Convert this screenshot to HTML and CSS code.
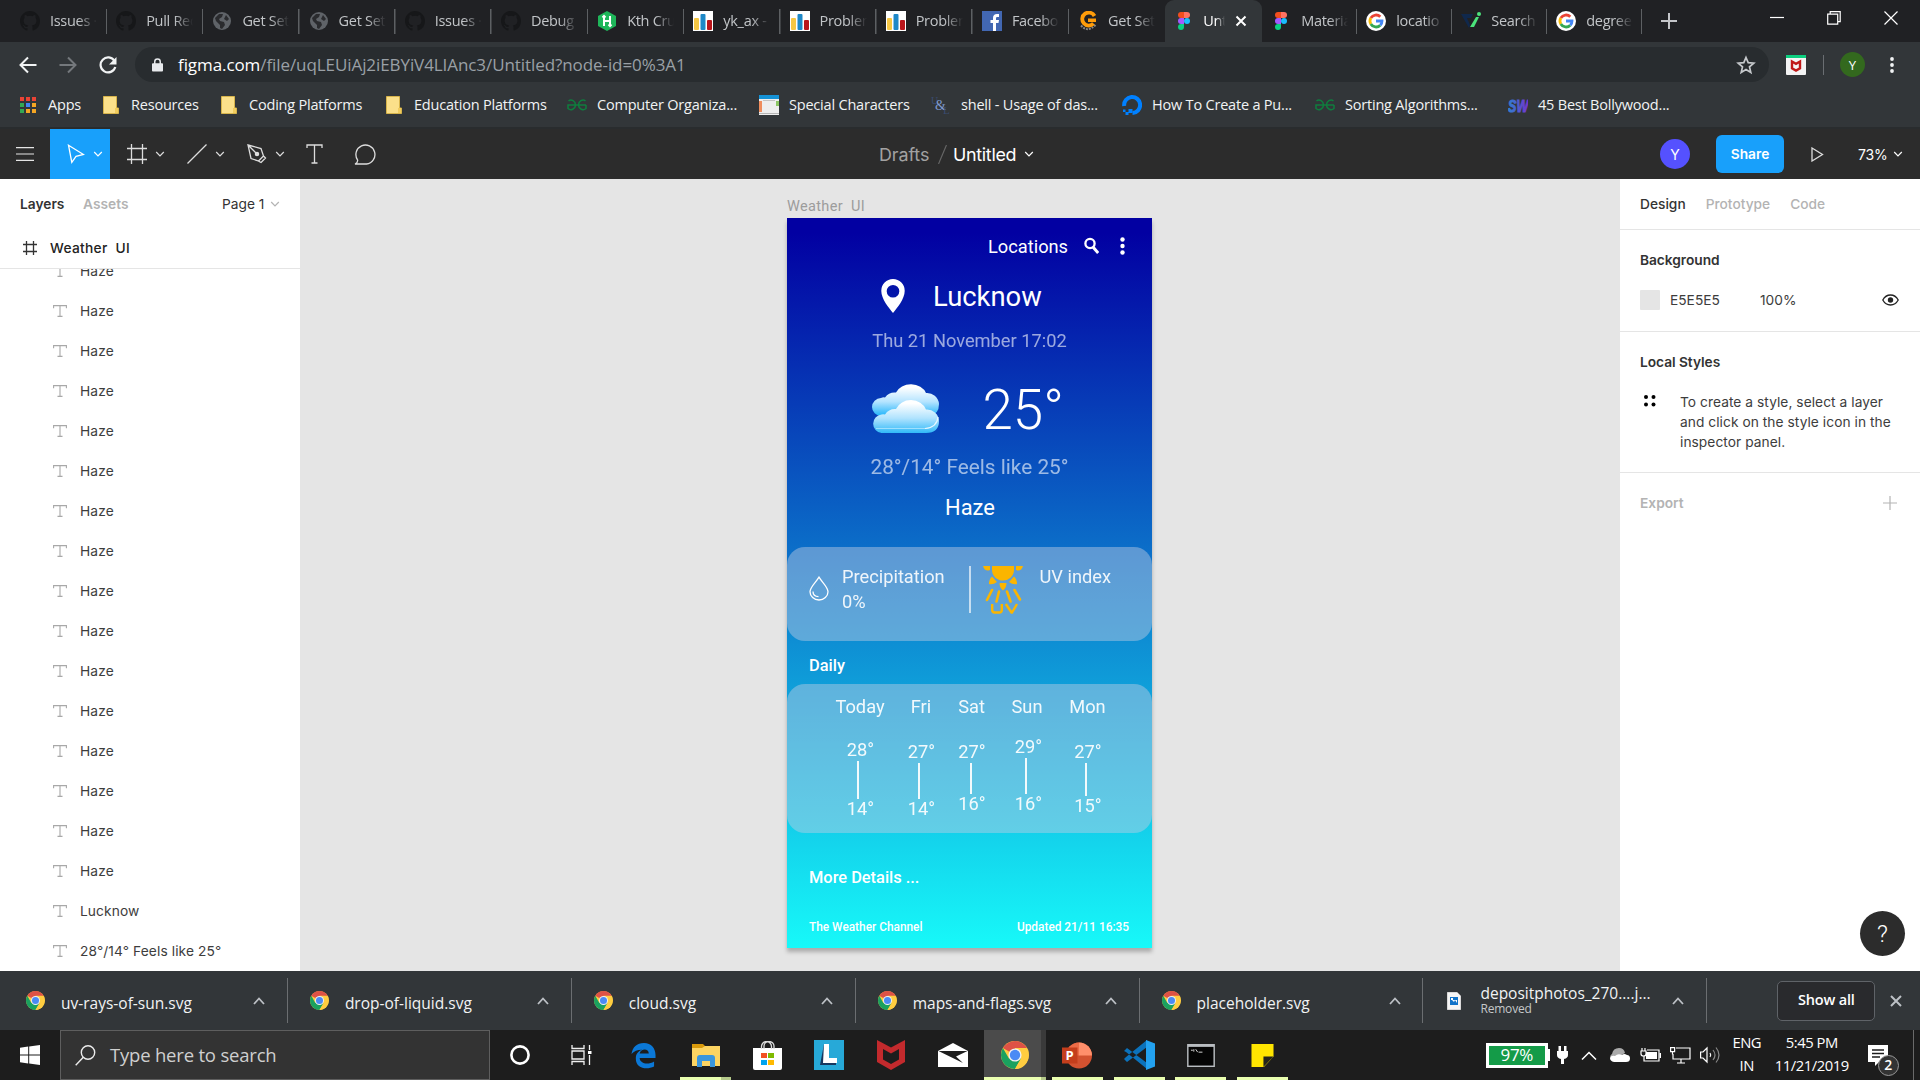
FILE: index.html
```html
<!DOCTYPE html>
<html lang="en">
<head>
<meta charset="utf-8">
<title>Untitled</title>
<link rel="stylesheet" href="styles.css">
</head>
<body>
<svg class="sprite" width="0" height="0">
  <defs>
    <linearGradient id="cloudBack" x1="0" y1="0" x2="0" y2="1"><stop offset="0.1" stop-color="#fff"/><stop offset="0.55" stop-color="#b5e4ff"/><stop offset="1" stop-color="#1fb4fb"/></linearGradient>
    <linearGradient id="cloudFront" x1="0" y1="0" x2="0" y2="1"><stop offset="0.1" stop-color="#fff"/><stop offset="0.55" stop-color="#b0e3fe"/><stop offset="1" stop-color="#30b9f8"/></linearGradient>
    <linearGradient id="swGrad"><stop offset="0" stop-color="#2f7fd0"/><stop offset="1" stop-color="#7a2fd0"/></linearGradient>
    <symbol id="github" viewBox="0 0 16 16"><path fill="#161719" d="M8 0C3.58 0 0 3.58 0 8c0 3.54 2.29 6.53 5.47 7.59.4.07.55-.17.55-.38v-1.49c-2.01.37-2.53-.49-2.69-.94-.09-.23-.48-.94-.82-1.13-.28-.15-.68-.52-.01-.53.63-.01 1.08.58 1.23.82.72 1.21 1.87.87 2.33.66.07-.52.28-.87.51-1.07-1.78-.2-3.64-.89-3.64-3.95 0-.87.31-1.59.82-2.15-.08-.2-.36-1.02.08-2.12 0 0 .67-.21 2.2.82a7.4 7.4 0 0 1 4 0c1.53-1.04 2.2-.82 2.2-.82.44 1.1.16 1.92.08 2.12.51.56.82 1.27.82 2.15 0 3.07-1.87 3.75-3.65 3.95.29.25.54.73.54 1.48v2.2c0 .21.15.46.55.38A8.01 8.01 0 0 0 16 8c0-4.42-3.58-8-8-8z"/></symbol>
    <symbol id="globe" viewBox="0 0 20 20"><circle cx="10" cy="10" r="9" fill="#5f6368"/><path fill="#2a2b2e" d="M3 7l4-4 4 0-1 3-3 2 1 2 4 1 1 3-3 4-2-1 0-3-4-4zM14 4l3 4-2 2-3-2z"/></symbol>
    <symbol id="hacker" viewBox="0 0 20 20"><path fill="#1fb65a" d="M10 0l9 5v10l-9 5-9-5V5z"/><path stroke="#fff" stroke-width="2" fill="none" d="M7 5v10M13 5v10M7 10h6M5.500 6.500L7 5l1.500 1.500M11.500 13.500L13 15l1.500-1.500"/></symbol>
    <symbol id="bars" viewBox="0 0 20 20"><path fill="#fff" d="M0 0h20v20H0z"/><rect x="1" y="7" width="5" height="12" rx="1" fill="#f6c744"/><rect x="7.500" y="3" width="5" height="16" rx="1" fill="#1e88c7"/><rect x="14" y="9" width="5" height="10" rx="1" fill="#b9151b"/></symbol>
    <symbol id="fb" viewBox="0 0 20 20"><path fill="#4267b2" d="M0 0h20v20H0z"/><path fill="#fff" d="M11 20v-8H8.500V9H11V7c0-2.700 1.500-4 4-4h2v3h-1.600c-1.200 0-1.400.6-1.400 1.500V9h3l-.5 3H14v8z"/></symbol>
    <symbol id="cfav" viewBox="0 0 20 20"><path fill="none" stroke="#888" stroke-width="2" d="M3 14.500q6.500 7.500 14.500-.5" stroke-dasharray="2 1"/><path fill="none" stroke="#ff9d0a" stroke-width="3.800" d="M16.500 5A6.500 6.500 0 1 0 15.500 12.500"/><path fill="#ff9d0a" d="M10 7.500h8V11h-8z"/></symbol>
    <symbol id="figma" viewBox="0 0 20 20"><path fill="#f24e1e" d="M7 1h3v6H7a3 3 0 0 1 0-6"/><path fill="#ff7262" d="M10 1h3a3 3 0 0 1 0 6h-3"/><path fill="#a259ff" d="M10 7v6H7a3 3 0 0 1 0-6"/><circle cx="13" cy="10" r="3" fill="#1abcfe"/><path fill="#0acf83" d="M10 13v3a3 3 0 1 1-3-3"/></symbol>
    <symbol id="google" viewBox="0 0 20 20"><circle cx="10" cy="10" r="10" fill="#fff"/><g fill="none" stroke-width="2.800"><path stroke="#ea4335" d="M4.800 7A6 6 0 0 1 14.300 5.800"/><path stroke="#fbbc05" d="M4.800 7a6 6 0 0 0 0 6"/><path stroke="#34a853" d="M4.800 13a6 6 0 0 0 9.500 1.200"/><path stroke="#4285f4" d="M14.300 14.200A6 6 0 0 0 16 10h-6"/></g></symbol>
    <symbol id="vi" viewBox="0 0 20 20"><path fill="#10284c" d="M0 3h12l-2 4H6l3 7-1 3z"/><path fill="#4be37b" d="M15 6h3l-5 10h-4z"/><circle cx="18" cy="3" r="2" fill="#4be37b"/></symbol>
    <symbol id="folder" viewBox="0 0 16 18"><path fill="#fbe08a" stroke="#d7b44b" d="M.5.5h13V12h2v5.500H.500z"/><path fill="#f1cc5d" d="M12 12h3v5h-3z"/></symbol>
    <symbol id="gfg" viewBox="0 0 20 14"><g fill="none" stroke="#0f7d3e" stroke-width="1.500"><path d="M1.500 2.800A4.600 5 0 0 1 8.500 7a4.600 5 0 0 1-7.500 3.500V7h18M18.500 2.800A4.600 5 0 0 0 11.500 7a4.600 5 0 0 0 7.500 3.500V7"/></g></symbol>
    <symbol id="chrome" viewBox="0 0 20 20"><circle cx="10" cy="10" r="10" fill="#ffcd40"/><path fill="#de5246" d="M10 10L1.340 5A10 10 0 0 1 18.660 5H10z"/><path fill="#1aa15f" d="M1.340 5A10 10 0 0 0 10 20l4.300-7.500L10 10 5.670 12.500z"/><path fill="#ffcd40" d="M18.660 5.500H10L14.330 12.500 10 20A10 10 0 0 0 18.660 5.500"/><circle cx="10" cy="10" r="4.700" fill="#f1f1f1"/><circle cx="10" cy="10" r="3.700" fill="#4a8af4"/></symbol>
    <symbol id="chev" viewBox="0 0 10 6"><path fill="none" stroke="currentColor" stroke-width="1.200" d="M1.200 1L5 4.800 8.800 1"/></symbol>
    <symbol id="up" viewBox="0 0 12 8"><path fill="none" stroke="#bdc1c6" stroke-width="1.800" d="M1 7l5-5.500L11 7"/></symbol>
    <symbol id="tt" viewBox="0 0 14 12"><path fill="none" stroke="#a8a8a8" stroke-width="1.100" d="M.6 3.200V.6h12.800v2.600M7 .6v10.800M4.500 11.400h5"/></symbol>
  </defs>
</svg>

<header class="tabs">
  <div class="tab"><svg><use href="#github"/></svg><span>Issues ·</span></div>
  <div class="tab"><svg><use href="#github"/></svg><span>Pull Req</span></div>
  <div class="tab"><svg><use href="#globe"/></svg><span>Get Set</span></div>
  <div class="tab"><svg><use href="#globe"/></svg><span>Get Set</span></div>
  <div class="tab"><svg><use href="#github"/></svg><span>Issues ·</span></div>
  <div class="tab"><svg><use href="#github"/></svg><span>Debug</span></div>
  <div class="tab"><svg><use href="#hacker"/></svg><span>Kth Cru</span></div>
  <div class="tab"><svg><use href="#bars"/></svg><span>yk_ax -</span></div>
  <div class="tab"><svg><use href="#bars"/></svg><span>Problem</span></div>
  <div class="tab"><svg><use href="#bars"/></svg><span>Problem</span></div>
  <div class="tab"><svg><use href="#fb"/></svg><span>Facebo</span></div>
  <div class="tab before-active"><svg><use href="#cfav"/></svg><span>Get Set</span></div>
  <div class="tab active"><svg><use href="#figma"/></svg><span>Unt</span><svg class="close" viewBox="0 0 12 12"><path fill="none" stroke="#fff" stroke-width="2" d="M1.500 1.500l9 9M10.500 1.500l-9 9"/></svg></div>
  <div class="tab late"><svg><use href="#figma"/></svg><span>Materia</span></div>
  <div class="tab late"><svg><use href="#google"/></svg><span>locatio</span></div>
  <div class="tab late"><svg><use href="#vi"/></svg><span>Search</span></div>
  <div class="tab late"><svg><use href="#google"/></svg><span>degree</span></div>
  <svg class="newtab" viewBox="0 0 16 16"><path stroke="#c4c6c9" stroke-width="2" d="M8 0v16M0 8h16"/></svg>
  <div class="winctl">
    <svg viewBox="0 0 14 14"><path stroke="#fff" stroke-width="1.200" d="M0 6.500h14"/></svg>
    <svg viewBox="0 0 14 14"><path fill="none" stroke="#fff" stroke-width="1.200" d="M.7 3.200h10v10h-10zM3.200 3V.7h10v10h-2.500"/></svg>
    <svg viewBox="0 0 14 14"><path stroke="#fff" stroke-width="1.200" d="M.5.5l13 13M13.500.500l-13 13"/></svg>
  </div>
</header>

<div class="addr">
  <svg class="nav" viewBox="0 0 18 18"><path fill="none" stroke="#f1f3f4" stroke-width="2" d="M17.500 9H2M9 1.500L1.500 9 9 16.500"/></svg>
  <svg class="nav" viewBox="0 0 18 18"><path fill="none" stroke="#74787c" stroke-width="2" d="M.5 9H16M9 1.500L16.500 9 9 16.500"/></svg>
  <svg class="nav" viewBox="0 0 18 18"><path fill="none" stroke="#f1f3f4" stroke-width="2.200" d="M15.500 5A7.500 7.500 0 1 0 16.300 11"/><path fill="#f1f3f4" d="M17.500 1v7.500H10z"/></svg>
  <div class="omni">
    <svg class="lock" viewBox="0 0 12 14"><rect y="5" width="12" height="9" rx="1" fill="#e8eaed"/><path fill="none" stroke="#e8eaed" stroke-width="1.600" d="M3 6V3.500a3 3 0 0 1 6 0V6"/></svg>
    <span class="url"><b>figma.com</b>/file/uqLEUiAj2iEBYiV4LIAnc3/Untitled?node-id=0%3A1</span>
    <svg class="star" viewBox="0 0 20 20"><path fill="none" stroke="#c6c9cc" stroke-width="1.700" d="M10 2.500l2.200 5.200 5.600.5-4.300 3.700 1.300 5.500L10 14.500l-4.800 2.900 1.300-5.500L2.200 8.200l5.600-.5z"/></svg>
  </div>
  <svg class="ext" viewBox="0 0 20 20"><rect width="20" height="20" rx="1" fill="#f4f4f4"/><path fill="#0ccf7f" d="M0 0h20v3H0z"/><path fill="none" stroke="#c01818" stroke-width="2.400" d="M6 6.500l4 2.300 4-2.300v6.700l-4 2.300-4-2.300z"/></svg>
  <i class="vbar"></i>
  <span class="me">Y</span>
  <svg class="kebab" viewBox="0 0 4 16"><g fill="#f1f3f4"><circle cx="2" cy="2" r="1.900"/><circle cx="2" cy="8" r="1.900"/><circle cx="2" cy="14" r="1.900"/></g></svg>
</div>

<nav class="marks">
  <a class="narrow"><svg viewBox="0 0 16 16"><g fill="#ea4335"><path d="M0 0h4v4H0zM6 0h4v4H6zM12 0h4v4h-4z"/></g><path fill="#34a853" d="M0 6h4v4H0zM0 12h4v4H0z"/><path fill="#4285f4" d="M6 6h4v4H6z"/><path fill="#f5a623" d="M12 6h4v4h-4zM6 12h4v4H6zM12 12h4v4h-4z"/></svg><span>Apps</span></a>
  <a class="narrow"><svg><use href="#folder"/></svg><span>Resources</span></a>
  <a class="narrow"><svg><use href="#folder"/></svg><span>Coding Platforms</span></a>
  <a class="narrow"><svg><use href="#folder"/></svg><span>Education Platforms</span></a>
  <a><svg><use href="#gfg"/></svg><span>Computer Organiza...</span></a>
  <a><svg viewBox="0 0 20 20"><path fill="#eee" d="M0 0h20v20H0z"/><path fill="#1592d6" d="M0 0h20v4H0z"/><path fill="#ef8d5d" d="M0 6h3v11H0z"/><path fill="#8cc665" d="M17 6h3v5h-3z"/><path fill="#b5b5b5" d="M0 18h20v1H0zM4 5h12v.7H4z"/></svg><span>Special Characters</span></a>
  <a><svg viewBox="0 0 20 20"><g font-family="Liberation Serif"><text x="0" y="9" fill="#3a4c70" font-size="10">U</text><text x="4" y="15" fill="#7f9ad0" font-size="14">&amp;</text><text x="12" y="19" fill="#3a4c70" font-size="11">L</text></g></svg><span>shell - Usage of das...</span></a>
  <a><svg viewBox="0 0 20 20"><path fill="none" stroke="#0080ff" stroke-width="4" d="M2.200 11A8 8 0 1 1 10.500 18"/><path fill="#0080ff" d="M6.500 14h4v4h-4zM3.500 17h3v3h-3zM1 14.500h2.500V17H1z"/></svg><span>How To Create a Pu...</span></a>
  <a><svg><use href="#gfg"/></svg><span>Sorting Algorithms...</span></a>
  <a><svg viewBox="0 0 20 20"><text transform="translate(0 17) scale(.74 1)" font-family="Liberation Sans" font-weight="700" font-style="italic" font-size="17" fill="url(#swGrad)" stroke="url(#swGrad)">SW</text></svg><span>45 Best Bollywood...</span></a>
</nav>

<div class="figbar">
  <div class="tools">
    <div class="menu"><svg width="18" height="14" viewBox="0 0 18 14"><path stroke="#e5e5e5" stroke-width="1.200" d="M0 .7h18M0 7h18M0 13.300h18"/></svg></div>
    <div class="tool on"><svg width="18" height="20" viewBox="0 0 18 20"><path fill="none" stroke="#fff" stroke-width="1.300" d="M1.500 1.200l15 9.300-7.500 1.800-4.200 6z"/></svg><svg class="cv"><use href="#chev"/></svg></div>
    <div class="tool"><svg width="20" height="20" viewBox="0 0 20 20"><path stroke="#ddd" stroke-width="1.300" d="M4.500 0v20M15.500 0v20M0 4.500h20M0 15.500h20"/></svg><svg class="cv"><use href="#chev"/></svg></div>
    <div class="tool"><svg width="20" height="20" viewBox="0 0 20 20"><path stroke="#ddd" stroke-width="1.300" d="M.5 19.500l19-19"/></svg><svg class="cv"><use href="#chev"/></svg></div>
    <div class="tool"><svg width="20" height="20" viewBox="0 0 20 20"><g fill="none" stroke="#ddd" stroke-width="1.300"><path d="M1 1l13 3.500 2.500 7.500-5 5-7.500-2.500zM1 1l8 8M14 18.500l4.500-4.500-2-2-5 5z"/><circle cx="10" cy="10" r="1.600" fill="#ddd"/></g></svg><svg class="cv"><use href="#chev"/></svg></div>
    <div class="plain"><svg width="17" height="20" viewBox="0 0 17 20"><path fill="none" stroke="#ddd" stroke-width="1.300" d="M1 4V1h15v3M8.500 1v18M5.500 19h6"/></svg></div>
    <div class="plain"><svg width="23" height="21" viewBox="0 0 23 21"><path fill="none" stroke="#ddd" stroke-width="1.300" d="M1 20c2-1 3-2.500 2.500-4.200A9.500 9.500 0 1 1 12.500 20z"/></svg></div>
  </div>
  <div class="title"><span class="dr">Drafts</span><svg width="9" height="19" viewBox="0 0 9 19"><path stroke="#666" stroke-width="1.200" d="M.5 19L8.500 0"/></svg><span class="un">Untitled</span><svg class="cv"><use href="#chev"/></svg></div>
  <div class="acts"><span class="ava">Y</span><span class="share">Share</span><svg width="13" height="15" viewBox="0 0 13 15"><path fill="none" stroke="#ddd" stroke-width="1.300" d="M1 1l10.500 6.500L1 14z"/></svg><span class="pct">73%</span><svg class="cv"><use href="#chev"/></svg></div>
</div>

<main class="work">
  <aside class="left">
    <div class="ltabs"><span class="s on">Layers</span><span class="s">Assets</span><span class="page">Page 1</span><svg class="cv"><use href="#chev"/></svg></div>
    <div class="frame"><svg width="14" height="14" viewBox="0 0 14 14"><path stroke="#333" stroke-width="1.300" d="M3.500 0v14M10.500 0v14M0 3.500h14M0 10.500h14"/></svg><span>Weather&nbsp; UI</span></div>
    <div class="layers">
      <div><svg><use href="#tt"/></svg>Haze</div><div><svg><use href="#tt"/></svg>Haze</div><div><svg><use href="#tt"/></svg>Haze</div><div><svg><use href="#tt"/></svg>Haze</div>
      <div><svg><use href="#tt"/></svg>Haze</div><div><svg><use href="#tt"/></svg>Haze</div><div><svg><use href="#tt"/></svg>Haze</div><div><svg><use href="#tt"/></svg>Haze</div>
      <div><svg><use href="#tt"/></svg>Haze</div><div><svg><use href="#tt"/></svg>Haze</div><div><svg><use href="#tt"/></svg>Haze</div><div><svg><use href="#tt"/></svg>Haze</div>
      <div><svg><use href="#tt"/></svg>Haze</div><div><svg><use href="#tt"/></svg>Haze</div><div><svg><use href="#tt"/></svg>Haze</div><div><svg><use href="#tt"/></svg>Haze</div>
      <div><svg><use href="#tt"/></svg>Lucknow</div>
      <div><svg><use href="#tt"/></svg>28°/14° Feels like 25°</div>
    </div>
  </aside>

  <section class="canvas">
    <div class="fname">Weather&nbsp; UI</div>
    <div class="phone">
      <div class="top"><span>Locations</span><svg width="15" height="17" viewBox="0 0 15 17"><circle cx="6" cy="6.500" r="4.600" fill="none" stroke="#fff" stroke-width="2.300"/><path stroke="#fff" stroke-width="3" d="M9.200 10.200l5 5.800"/></svg><svg width="5" height="18" viewBox="0 0 5 18"><g fill="#fff"><circle cx="2.500" cy="2.500" r="2.200"/><circle cx="2.500" cy="9" r="2.200"/><circle cx="2.500" cy="15.500" r="2.200"/></g></svg></div>
      <div class="city"><svg width="24" height="34" viewBox="0 0 24 34"><path fill="#fff" fill-rule="evenodd" d="M12 0a11.700 11.700 0 0 1 11.700 12C23.700 20 16 29 12 34 8 29 .3 20 .3 12A11.700 11.700 0 0 1 12 0m0 6a6 6 0 1 0 0 12.600A6 6 0 0 0 12 6"/></svg><span>Lucknow</span></div>
      <div class="date">Thu 21 November 17:02</div>
      <div class="now">
        <svg width="68" height="52" viewBox="0 0 68 52"><path fill="url(#cloudBack)" d="M9 34A9 9 0 0 1 9 16q2-1 4-.5a12 12 0 0 1 11-5A16 13 0 0 1 54 11a12 12 0 0 1 13 11q0 10-9 12z"/><path fill="url(#cloudFront)" d="M9.500 51a9.300 9.300 0 0 1 0-18.500q1.500-.3 3.500 0a12 12 0 0 1 11-5.500A16 14 0 0 1 54 27.500 12 12 0 0 1 67 39q0 12-13 12z"/><path fill="none" stroke="#9fe0fd" stroke-width="1" d="M4 46.500h49"/><path fill="none" stroke="#e9f8ff" stroke-width="1.200" d="M53 46.500Q65 45.500 66 35"/></svg>
        <span>25°</span></div>
      <div class="feels">28°/14° Feels like 25°</div>
      <div class="haze">Haze</div>
      <div class="card one">
        <svg class="drop" width="20" height="25" viewBox="0 0 20 25"><g fill="none" stroke="#fff" stroke-width="1.300"><path d="M10 1.200c3 5 9 10 9 14.600a9 8.200 0 0 1-18 0C1 11.200 7 6.200 10 1.200z"/><path d="M4 15.500c0 3 2 5 5.500 5.200"/></g></svg>
        <div class="prec">Precipitation<br>0%</div>
        <i class="rule"></i>
        <svg class="uv" width="40" height="48" viewBox="0 0 40 48"><g fill="#fbb500"><path d="M9 0h22v4a11 10.500 0 0 1-22 0zM0 0h7v4Q2 6 0 0zM40 0h-7v4q5 2 7-4zM16.500 17h7q0 5-3.500 7.500Q16.500 22 16.500 17zM9 10.500l5 5.500q-4 3-8 2 0-5 3-7.500zM31 10.500l-5 5.500q4 3 8 2 0-5-3-7.500z"/></g><path fill="none" stroke="#fbb500" stroke-width="2.600" stroke-linecap="round" d="M9 24L4 34M16 25.500L13.500 35.500M24 25.500L27.500 35.500M31.500 24l5.500 9.500"/><path fill="none" stroke="#fbb500" stroke-width="2.400" d="M9.200 38v6q0 2.500 2.500 2.500h4.600q2.500 0 2.500-2.500v-6M22.800 38l5.700 8.500h.500L34 38"/></svg>
        <div class="uvt">UV index</div>
      </div>
      <div class="daily">Daily</div>
      <div class="card two">
        <div class="day d1"><span>Today</span><b>28°</b><i></i><b>14°</b></div>
        <div class="day d2"><span>Fri</span><b>27°</b><i></i><b>14°</b></div>
        <div class="day d3"><span>Sat</span><b>27°</b><i></i><b>16°</b></div>
        <div class="day d4"><span>Sun</span><b>29°</b><i></i><b>16°</b></div>
        <div class="day d5"><span>Mon</span><b>27°</b><i></i><b>15°</b></div>
      </div>
      <div class="more">More Details ...</div>
      <div class="foot"><span>The Weather Channel</span><span>Updated 21/11 16:35</span></div>
    </div>
  </section>

  <aside class="right">
    <div class="rtabs"><span class="on">Design</span><span>Prototype</span><span>Code</span></div>
    <div class="bg"><h3>Background</h3>
      <div class="row"><i></i><span class="hex">E5E5E5</span><span class="op">100%</span><svg width="17" height="12" viewBox="0 0 17 12"><path fill="none" stroke="#222" stroke-width="1.300" d="M.8 6Q3.500 1 8.500 1t7.700 5Q13.500 11 8.500 11T.8 6z"/><circle cx="8.500" cy="6" r="2.700" fill="#222"/></svg></div></div>
    <div class="styles"><h3>Local Styles</h3>
      <div class="hint"><svg width="12" height="12" viewBox="0 0 12 12"><circle cx="2" cy="2" r="2"/><circle cx="9.500" cy="2" r="2"/><circle cx="2" cy="9.500" r="2"/><circle cx="9.500" cy="9.500" r="2"/></svg><p>To create a style, select a layer<br>and click on the style icon in the<br>inspector panel.</p></div></div>
    <div class="export"><span>Export</span><svg width="14" height="14" viewBox="0 0 14 14"><path stroke="#b3b3b3" stroke-width="1.200" d="M7 0v14M0 7h14"/></svg></div>
    <div class="help">?</div>
  </aside>
</main>

<div class="downloads">
  <div class="dl"><svg><use href="#chrome"/></svg><span>uv-rays-of-sun.svg</span><svg class="up"><use href="#up"/></svg></div>
  <div class="dl"><svg><use href="#chrome"/></svg><span>drop-of-liquid.svg</span><svg class="up"><use href="#up"/></svg></div>
  <div class="dl"><svg><use href="#chrome"/></svg><span>cloud.svg</span><svg class="up"><use href="#up"/></svg></div>
  <div class="dl"><svg><use href="#chrome"/></svg><span>maps-and-flags.svg</span><svg class="up"><use href="#up"/></svg></div>
  <div class="dl"><svg><use href="#chrome"/></svg><span>placeholder.svg</span><svg class="up"><use href="#up"/></svg></div>
  <div class="dl file"><svg viewBox="0 0 14 18"><path fill="#f5f5f5" stroke="#999" stroke-width=".6" d="M0 0h10l4 4v14H0z"/><path fill="#1173c9" d="M3 5h8v8H3z"/><path fill="#fff" d="M4 6h2v2H4zM5 8l2 2 1-2 2 3V8z"/></svg><span>depositphotos_270....j...<small>Removed</small></span><svg class="up"><use href="#up"/></svg></div>
  <div class="showall">Show all</div>
  <svg class="dlx" viewBox="0 0 12 12"><path stroke="#bdc1c6" stroke-width="2" d="M1 1l10 10M11 1L1 11"/></svg>
</div>

<footer class="task">
  <div class="start"><svg width="20" height="20" viewBox="0 0 20 20"><path fill="#fff" d="M0 2.800L8.200 1.600v7.900H0zM9.200 1.400L20 0v9.500H9.200zM0 10.500h8.200v7.900L0 17.200zM9.200 10.500H20V20L9.200 18.600z"/></svg></div>
  <div class="search"><svg width="21" height="21" viewBox="0 0 21 21"><circle cx="13" cy="7.500" r="6.700" fill="none" stroke="#ececec" stroke-width="1.400"/><path stroke="#ececec" stroke-width="1.400" d="M8.300 12.300L.7 20.300"/></svg><span>Type here to search</span></div>
  <div class="apps">
    <div><svg width="20" height="20" viewBox="0 0 20 20"><circle cx="10" cy="10" r="8.600" fill="none" stroke="#fff" stroke-width="2.600"/></svg></div>
    <div><svg width="21" height="20" viewBox="0 0 21 20"><path fill="none" stroke="#f0f0f0" stroke-width="1.300" d="M1 0v3.500h12V0M1 6h12v8H1zM1 20v-3.500h12V20M18.500 0v5M18.500 10v10"/><path fill="#fff" d="M17 6h3.500v3H17z"/></svg></div>
    <div><svg width="25" height="27" viewBox="0 0 26 27"><path fill="#0b78d7" d="M.5 12C1.500 5 6 .5 13.500.5 21.500.5 26 6.500 25.500 14.500v1.700H9c.3 6 9 7.500 15 3.500v5.200c-8 3.800-19 2-19-8.400C5 12 7.500 9 11.500 7.600 7 7.500 3 9 .5 12zM9 11.500h9.500c0-6-8.500-5.500-9.500 0z"/></svg></div>
    <div class="run grp"><svg width="28" height="24" viewBox="0 0 28 24"><path fill="#d99a0b" d="M0 1h11l3 3v4H0z"/><path fill="#fcd462" d="M0 5h10l3-2h15v20H0z"/><path fill="#3a96dd" d="M5 24v-9q0-3 3-3h12q3 0 3 3v9h-5v-6h-8v6z"/></svg></div>
    <div><svg width="29" height="29" viewBox="0 0 29 29"><path fill="#fff" d="M0 7h29v20q0 2-2 2H2q-2 0-2-2z"/><path fill="none" stroke="#ddd" stroke-width="1.300" d="M8.500 8V5.500a5 5 0 0 1 10 0V8M11 8V5a5 4.500 0 0 1 10 0v3"/><path fill="#f25022" d="M8 12h6v5H8z"/><path fill="#7fba00" d="M15 12h6v5h-6z"/><path fill="#00a4ef" d="M8 19h6v5H8z"/><path fill="#ffb900" d="M15 19h6v5h-6z"/></svg></div>
    <div><svg width="30" height="30" viewBox="0 0 30 30"><path fill="#27a9d8" d="M0 0h30v30H0z"/><path fill="#17375e" d="M10 4L6 25h16v-3H11z"/><path fill="#fff" d="M10 4h5v14h8v5H9z"/></svg></div>
    <div><svg width="28" height="30" viewBox="0 0 28 30"><path fill="#c32a2d" d="M0 0l14 7.500L28 0v22l-14 8-14-8z"/><path fill="#1d1d1d" d="M6 9l8 4.500L22 9v10.500L14 24l-8-4.500z"/></svg></div>
    <div><svg width="30" height="24" viewBox="0 0 30 24"><path fill="#fff" d="M0 8L15 0l15 8v16H0z"/><path fill="#1d1d1d" d="M.5 8h29L18 13.500l7 6.500z"/></svg></div>
    <div class="run here"><svg width="28" height="28"><use href="#chrome"/></svg></div>
    <div class="run"><svg width="30" height="27" viewBox="0 0 30 27"><circle cx="17" cy="13.500" r="13" fill="#d35230"/><path fill="#ed6c47" d="M17 .5a13 13 0 0 0-13 13h13z"/><path fill="#ff8f6b" d="M17 .5a13 13 0 0 1 13 13H17z"/><path fill="#c43e1c" d="M0 5.500h15.500v16H0z"/><text x="3.500" y="18" fill="#fff" font-family="Open Sans" font-weight="700" font-size="13">P</text></svg></div>
    <div class="run"><svg width="31" height="30" viewBox="0 0 31 30"><path fill="#0b72bb" d="M0 11l3-3 20 15v6L2 12zM0 19l3 3L23 7V0L2 17z"/><path fill="#23a2f0" d="M22 0l9 3.500v23L22 30z"/></svg></div>
    <div class="run"><svg width="28" height="23" viewBox="0 0 29 24"><path fill="#b9bdc1" d="M0 0h29v24H0z"/><path fill="#050505" d="M1.500 3h26v19.500h-26z"/><path stroke="#ddd" d="M4 6.500h2M7 5.500v2.500M9 5.500l2 3M12 8.500h4" /></svg></div>
    <div class="run"><svg width="23" height="23" viewBox="0 0 23 24"><path fill="#ffe500" d="M0 0h23v13L13 24H0z"/><path fill="#22231c" d="M12.500 24V13H23z"/></svg></div>
  </div>
  <div class="tray">
    <span class="batt">97%</span><i class="nub"></i>
    <svg class="plug" viewBox="0 0 11 18"><path fill="#fff" d="M1.500 0h2.500v5h3V0h2.500v5H11v4q0 3-4 4v5H4v-5q-4-1-4-4V5h1.500z"/></svg>
    <svg class="tup" viewBox="0 0 16 9"><path fill="none" stroke="#fff" stroke-width="1.500" d="M1 8.500l7-7 7 7"/></svg>
    <svg class="od" viewBox="0 0 21 14"><path fill="#aaa" d="M2 11Q0 8 3 6 4 0 10 0q5 0 6 5L4 12z"/><path fill="#fff" d="M5 14q-4-1-4-4 1-3 5-2 3-3 7-1 2-2 5 0 3 0 3 3.500 0 3.500-4 3.500z"/></svg>
    <svg class="tb" viewBox="0 0 21 14"><path fill="#fff" d="M6 4h11v7H6z"/><path fill="none" stroke="#fff" stroke-width="1.200" d="M7 2h12v11H4V8M1 3h5v3q0 2-2.500 2T1 6zM2 0v3M5 0v3M20.400 5v5"/></svg>
    <svg class="tm" viewBox="0 0 21 17"><path fill="none" stroke="#fff" stroke-width="1.200" d="M6 1h14v11H3V7M7 16h8M11 12v4M.6.600h4v4h-4zM2.500 4.500v3"/></svg>
    <svg class="ts" viewBox="0 0 21 18"><path fill="none" stroke="#fff" stroke-width="1.200" d="M.6 6H3l4-4v14l-4-4H.6z"/><path fill="none" stroke="#fff" stroke-width="1.200" d="M10 7q1.500 2 0 4"/><path fill="none" stroke="#888" stroke-width="1.200" d="M13 4q4 5 0 10M16 1.500q6 7.500 0 15"/></svg>
    <div class="lang">ENG<br>IN</div>
    <div class="clock">5:45 PM<br>11/21/2019</div>
    <div class="note"><svg width="20" height="21" viewBox="0 0 20 21"><path fill="#fff" d="M0 0h20v17h-9l-4 4v-4H0z"/><path stroke="#1d1d1d" stroke-width="1.300" d="M4 5h12M4 8.500h12M4 12h8"/></svg><span>2</span></div>
  </div>
</footer>
</body>
</html>
```
FILE: styles.css
```css
* { box-sizing: border-box; }
body { margin: 0; width: 1920px; height: 1080px; overflow: hidden; display: flex; flex-direction: column; background: #323639; font-family: "Open Sans", "Noto Sans", sans-serif; }
svg { flex: none; display: block; }
.sprite { position: absolute; }

/* browser tabs */
.tabs { height: 42px; flex: none; display: flex; background: #202124; padding-left: 11px; }
.tab { width: 96.200px; height: 42px; padding-left: 9px; display: flex; align-items: center; flex: none; background: linear-gradient(#5d6063, #5d6063) right 9px / 1.500px 25px no-repeat; }
.tab svg { width: 20px; height: 20px; }
.tab span { margin-left: 10px; width: 47px; overflow: hidden; white-space: pre; color: #c2c5c8; font-size: 14.500px; letter-spacing: -0.300px; padding-bottom: 1px; -webkit-mask-image: linear-gradient(90deg, #000 60%, transparent); mask-image: linear-gradient(90deg, #000 60%, transparent); }
.tab.before-active { background: none; }
.tab.active { background: #323639; border-radius: 9px 9px 0 0; width: 97px; }
.tab.active span { width: 22px; color: #fff; margin-left: 9px; }
.tab.active .close { width: 12px; height: 12px; margin-left: 10px; }
.tab.late { width: 95px; }
.newtab { width: 16px; height: 16px; margin: 13px 0 0 19px; }
.winctl { margin-left: auto; padding: 11px 22px 0 0; display: flex; gap: 43px; }
.winctl svg { width: 14px; height: 14px; }

/* address row */
.addr { height: 45px; flex: none; display: flex; align-items: center; padding-left: 19px; }
.nav { width: 18px; height: 18px; margin-right: 22px; }
.omni { width: 1634px; height: 35px; margin-left: -4px; border-radius: 18px; background: #282c2f; display: flex; align-items: center; padding: 0 13px 0 17px; }
.lock { width: 11px; height: 14px; }
.url { margin-left: 15px; font-size: 17px; letter-spacing: -0.080px; color: #9aa0a6; flex: 1; white-space: nowrap; padding-bottom: 1px; }
.url b { font-weight: 400; color: #fff; }
.star { width: 20px; height: 20px; }
.ext { width: 20px; height: 20px; margin-left: 17px; }
.vbar { width: 1px; height: 20px; background: #6a6e72; margin-left: 17px; }
.me { width: 25px; height: 25px; border-radius: 50%; background: #33691e; color: #fff; font-size: 13px; display: grid; place-items: center; margin-left: 16px; }
.kebab { width: 4px; height: 16px; margin-left: 25px; }

/* bookmarks */
.marks { height: 42px; flex: none; padding-left: 20px; display: grid; grid-template-columns: 83px 118px 165px 181px 192px 172px 191px 193px 193px 200px; border-bottom: 2px solid #292c2e; padding-bottom: 4px; }
.marks a { display: flex; align-items: center; color: #f1f3f4; font-size: 14.500px; white-space: nowrap; }
.marks svg { width: 20px; height: 20px; margin-right: 10px; }
.marks .narrow svg { width: 16px; height: 18px; margin-right: 12px; }
.marks span { letter-spacing: -0.200px; padding-bottom: 1px; }

/* editor toolbar */
.figbar { height: 50px; flex: none; background: #2c2c2c; display: grid; grid-template-columns: 879px 1fr 260px; font-family: Inter, sans-serif; color: #fff; }
.tools, .title, .acts { display: flex; align-items: center; }
.cv { width: 10px; height: 6px; }
.menu { width: 50px; padding-left: 16px; }
.tool { width: 60px; height: 50px; display: flex; align-items: center; padding-left: 17px; gap: 8px; color: #ddd; }
.tool.on { background: #18a0fb; color: #fff; }
.tool .cv { margin-left: auto; margin-right: 7px; }
.plain { width: 48px; padding-left: 16px; }
.title { font-size: 17.900px; letter-spacing: -0.100px; }
.dr { color: #a2a2a2; width: 59px; }
.un { margin-left: 6px; width: 70px; letter-spacing: -0.300px; }
.title .cv { margin-left: 1px; }
.ava { width: 30px; height: 30px; border-radius: 50%; background: #5551ff; font-size: 14px; display: grid; place-items: center; }
.share { width: 68px; height: 38px; border-radius: 6px; background: #18a0fb; display: grid; place-items: center; margin: 0 27px 0 26px; font-size: 13.750px; font-weight: 600; }
.pct { width: 35px; margin-left: 34px; font-size: 14px; letter-spacing: -0.200px; }

/* workspace */
.work { height: 792px; flex: none; display: grid; grid-template-columns: 300px 1fr 300px; background: #e5e5e5; font-family: Inter, sans-serif; font-size: 13.750px; color: #3d3d3d; }
.left, .right { background: #fff; display: flex; flex-direction: column; overflow: hidden; }
.ltabs { height: 49px; display: flex; align-items: center; padding-left: 20px; flex: none; color: #b3b3b3; }
.ltabs .s { font-weight: 600; width: 63px; }
.ltabs .s.on, .rtabs .on { color: #333; }
.page { margin-left: 76px; width: 48px; color: #333; }
.frame { height: 41px; flex: none; display: flex; align-items: center; border-bottom: 1px solid #e5e5e5; font-weight: 500; padding: 0 0 1px 23px; gap: 13px; letter-spacing: .3px; color: #222; }
.layers { margin-top: -18px; clip-path: inset(18px 0 0 0); }
.layers div { height: 40px; display: flex; align-items: center; padding-left: 53px; letter-spacing: .1px; }
.layers svg { width: 14px; height: 12px; margin-right: 13px; }

.canvas { padding-left: 487px; }
.fname { height: 39px; padding-top: 18px; color: #9c9c9c; font: 14.500px/20px Roboto, sans-serif; letter-spacing: .35px; }
.phone { width: 365px; height: 730px; background: linear-gradient(#0200a2 2%, #17f9f9); box-shadow: 0 4px 4px rgba(0,0,0,.25); color: #fff; font-family: Roboto, sans-serif; font-size: 18.250px; display: flex; flex-direction: column; white-space: nowrap; }
.phone > div { flex: none; }
.top { height: 55px; display: flex; align-items: center; padding-left: 201px; }
.top span { width: 96px; padding-top: 2px; }
.top svg + svg { margin-left: 21px; }
.city { height: 47px; display: flex; align-items: center; padding-left: 94px; gap: 28px; font-size: 27.400px; }
.city span { padding-top: 1px; }
.city svg { margin-top: -2px; }
.date { height: 41px; line-height: 41px; text-align: center; opacity: .6; }
.now { height: 97px; display: flex; align-items: center; padding-left: 84.500px; font-size: 54.750px; font-weight: 300; }
.now svg { margin-top: -4px; }
.now span { margin-left: 43px; }
.feels { height: 20px; line-height: 18px; font-size: 20.800px; text-align: center; opacity: .6; }
.haze { height: 69px; line-height: 60px; font-size: 21.900px; text-align: center; padding-left: 1px; }
.card { border-radius: 18px; background: rgba(194,205,226,.45); }
.card.one { height: 94px; display: flex; padding-left: 21.500px; }
.drop { margin-top: 29px; }
.prec { margin: 17px 0 0 13.500px; line-height: 25.300px; width: 127px; opacity: .9; }
.rule { width: 2px; height: 47px; background: rgba(255,255,255,.65); margin-top: 19px; }
.uv { margin: 19px 0 0 12px; }
.uvt { margin: 17px 0 0 16.500px; line-height: 25.300px; opacity: .9; }
.daily { height: 43px; line-height: 49px; padding-left: 22px; font-size: 16.400px; font-weight: 500; }
.card.two { height: 149px; display: grid; grid-template-columns: 62px 60px 41px 70px 51px; padding: 12px 0 0 42px; }
.day { display: flex; flex-direction: column; align-items: center; line-height: 22px; opacity: .92; }
.day b { font-weight: 400; margin-right: -1px; }
.day i { width: 2px; background: #fff; margin-right: 4px; }
.day b:last-child { margin-top: -1px; }
.d1 span { margin-bottom: 21px; } .d1 i { height: 38px; }
.d2 span, .d3 span, .d5 span { margin-bottom: 23px; }
.d2 i { height: 36px; } .d3 i { height: 31px; margin-right: 2px; }
.d4 span { margin-bottom: 18px; } .d4 i { height: 36px; margin-right: 2px; }
.d4 b { margin-right: -3px; }
.d5 i { height: 33px; }
.more { height: 86px; line-height: 89px; padding-left: 22px; font-size: 16.400px; font-weight: 500; }
.foot { display: flex; justify-content: space-between; padding: 0 23px 0 22px; font-size: 11.860px; font-weight: 500; line-height: 17px; }

.rtabs { height: 51px; flex: none; display: flex; align-items: center; padding: 0 0 1px 20px; gap: 20px; font-weight: 500; color: #b3b3b3; border-bottom: 1px solid #e5e5e5; }
.right h3 { margin: 0; font-size: 13.750px; font-weight: 600; line-height: 20px; letter-spacing: -0.050px; color: #333; }
.bg { height: 102px; padding: 20px 20px 0; border-bottom: 1px solid #e5e5e5; }
.row { display: flex; align-items: center; height: 20px; margin-top: 20px; }
.row i { width: 20px; height: 20px; background: #e5e5e5; border-radius: 1px; }
.hex { margin-left: 10px; width: 90px; }
.op { width: 121.500px; }
.styles { height: 141px; padding: 20px 20px 0; border-bottom: 1px solid #e5e5e5; }
.hint { display: flex; padding: 20px 0 0 4px; line-height: 20px; }
.hint svg { margin: 3px 24px 0 0; }
.hint p { margin: 0; white-space: nowrap; letter-spacing: .05px; }
.export { height: 60px; display: flex; align-items: center; justify-content: space-between; padding: 0 23px 0 20px; font-weight: 600; color: #b3b3b3; }
.help { margin: auto 15px 15px auto; width: 45px; height: 45px; border-radius: 50%; background: #2c2c2c; color: #fff; display: grid; place-items: center; font: 300 24px Roboto, sans-serif; }

/* downloads shelf */
.downloads { height: 59px; flex: none; background: #323639; display: flex; align-items: center; padding-left: 4px; }
.dl { width: 283.900px; height: 45px; border-right: 1px solid #6b6e71; display: flex; align-items: center; padding-left: 22px; color: #f1f3f4; font-size: 15.500px; letter-spacing: 0; }
.dl svg { width: 19px; height: 19px; }
.dl span { margin: 5px 0 0 16px; width: 192px; white-space: nowrap; }
.dl .up { width: 12px; height: 8px; }
.dl.file svg:first-child { width: 14px; height: 18px; margin-left: 2px; }
.dl.file span { margin: 0 0 0 19px; width: 192px; line-height: 17px; }
.dl small { display: block; font-size: 12px; line-height: 14px; color: #c5c8ca; letter-spacing: -0.200px; }
.showall { width: 98px; height: 40px; margin-left: 70px; border: 1px solid #5f6368; border-radius: 5px; background: #292a2d; color: #fff; font-size: 14.500px; font-weight: 600; letter-spacing: -0.200px; display: grid; place-items: center; padding-bottom: 2px; }
.dlx { width: 12px; height: 12px; margin-left: 15px; }

/* taskbar */
.task { height: 50px; flex: none; background: #1d1d1d; display: flex; color: #fff; }
.start { width: 60px; display: grid; place-items: center; }
.search { width: 430px; border: 1px solid #5e5e5e; background: #333; display: flex; align-items: center; padding-left: 14px; gap: 14px; font-size: 18.500px; letter-spacing: -0.200px; color: #cfcfcf; }
.search span { padding-bottom: 2px; }
.apps { display: grid; grid-template-columns: repeat(13, 61.920px); margin-left: -1px; }
.apps div { display: grid; place-items: center; }
.run { background: linear-gradient(#eaffb0, #eaffb0) center bottom / 51px 3px no-repeat; }
.run.grp { background: linear-gradient(90deg, #eaffb0 80%, #b5c98a 80%) center bottom / 51px 3px no-repeat; }
.run.here { background: linear-gradient(90deg, #eaffb0 92%, #b5c98a 92%) bottom / 100% 3px no-repeat, linear-gradient(90deg, #4b4b4b 92%, #3a3a3a 92%); }
.tray { display: flex; align-items: center; margin-left: 192px; }
.batt { width: 62px; height: 25px; border: 3px solid #fff; background: #149b48; display: grid; place-items: center; font-size: 17px; letter-spacing: -0.300px; line-height: 1; padding-bottom: 2px; }
.nub { width: 2px; height: 12px; background: #fff; }
.plug { width: 11px; height: 18px; margin-left: 7px; }
.tup { width: 16px; height: 9px; margin-left: 13px; }
.od { width: 21px; height: 14px; margin-left: 12px; }
.tb { width: 21px; height: 14px; margin-left: 10px; }
.tm { width: 21px; height: 17px; margin-left: 9px; }
.ts { width: 21px; height: 18px; margin-left: 9px; }
.lang, .clock { font-size: 14.800px; line-height: 23px; text-align: center; letter-spacing: -0.450px; white-space: nowrap; padding-bottom: 2px; }
.lang { width: 30px; margin-left: 11px; }
.clock { width: 76px; margin-left: 12px; }
.note { position: relative; margin-left: 18px; width: 46px; height: 50px; border-right: 1px solid #6a6a6a; padding-top: 15px; }
.note span { position: absolute; left: 10px; top: 25px; width: 21px; height: 21px; border-radius: 50%; background: #333; border: 1px solid #999; font-size: 14px; font-weight: 600; line-height: 18px; text-align: center; }
```
